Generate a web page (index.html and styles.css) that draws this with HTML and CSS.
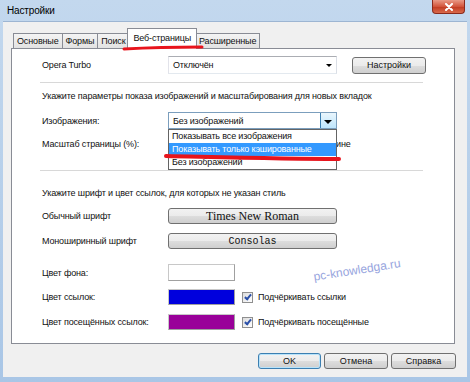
FILE: index.html
```html
<!DOCTYPE html>
<html lang="ru">
<head>
    <meta charset="UTF-8">
    <title>Настройки</title>
    <link rel="stylesheet" href="styles.css">
</head>
<body>
    <div class="window">
        <div class="titlebar">
            <span class="title">Настройки</span>
            <div class="close-btn">
                <svg width="10" height="8" viewBox="0 0 10 8">
                    <path d="M2 1 L8 7 M8 1 L2 7" stroke="#fff" stroke-width="2" stroke-linecap="round"/>
                </svg>
            </div>
        </div>
        <div class="client">
            <div class="tabs">
                <div class="tab">Основные</div>
                <div class="tab">Формы</div>
                <div class="tab">Поиск</div>
                <div class="tab active">Веб-страницы</div>
                <div class="tab">Расширенные</div>
                <svg class="mark mark-tab" width="82" height="8" viewBox="0 0 82 8">
                    <path d="M2 5 C20 4, 50 3, 80 3" stroke="#e8141c" stroke-width="3" fill="none" stroke-linecap="round"/>
                </svg>
            </div>
            <div class="panel">
                <div class="row row-turbo">
                    <span class="label">Opera Turbo</span>
                    <div class="combo">Отключён<span class="arrow"></span></div>
                    <button class="btn btn-setup">Настройки</button>
                </div>
                <div class="sep"></div>
                <div class="row heading">Укажите параметры показа изображений и масштабирования для новых вкладок</div>
                <div class="row row-images">
                    <span class="label">Изображения:</span>
                    <div class="combo open">Без изображений<span class="drop-btn"><span class="arrow"></span></span>
                        <ul class="droplist">
                            <li>Показывать все изображения</li>
                            <li class="selected">Показывать только кэшированные</li>
                            <li>Без изображений</li>
                            <svg class="mark mark-item" width="180" height="9" viewBox="0 0 180 9">
                                <path d="M3 3 C50 4, 120 6, 176 6" stroke="#e8141c" stroke-width="4" fill="none" stroke-linecap="round"/>
                            </svg>
                        </ul>
                    </div>
                </div>
                <div class="row row-zoom">
                    <span class="label">Масштаб страницы (%):</span>
                    <div class="field"></div>
                    <span class="check"><span class="box"></span>Подгонять по ширине</span>
                </div>
                <div class="sep sep-2"></div>
                <div class="row heading heading-2">Укажите шрифт и цвет ссылок, для которых не указан стиль</div>
                <div class="row row-font">
                    <span class="label">Обычный шрифт</span>
                    <button class="btn btn-font serif">Times New Roman</button>
                </div>
                <div class="row row-mono">
                    <span class="label">Моноширинный шрифт</span>
                    <button class="btn btn-font mono">Consolas</button>
                </div>
                <div class="row row-bg">
                    <span class="label">Цвет фона:</span>
                    <div class="swatch white"></div>
                </div>
                <div class="row row-link">
                    <span class="label">Цвет ссылок:</span>
                    <div class="swatch blue"></div>
                    <span class="check"><span class="box checked"></span>Подчёркивать ссылки</span>
                </div>
                <div class="row row-visited">
                    <span class="label">Цвет посещённых ссылок:</span>
                    <div class="swatch purple"></div>
                    <span class="check"><span class="box checked"></span>Подчёркивать посещённые</span>
                </div>
                <div class="watermark">pc-knowledga.ru</div>
            </div>
            <div class="footer">
                <button class="btn btn-ok">OK</button>
                <button class="btn btn-cancel">Отмена</button>
                <button class="btn btn-help">Справка</button>
            </div>
        </div>
    </div>
</body>
</html>
```

FILE: styles.css
```css
body {
    margin: 0;
    font-family: "Liberation Sans", Arial, sans-serif;
    font-size: 9px;
    letter-spacing: -0.15px;
    color: #111;
}
.window {
    width: 470px;
    height: 382px;
    box-sizing: border-box;
    padding: 0 3px 5px 3px;
    background: linear-gradient(#c3d8ee, #a9c6e6);
    display: flex;
    flex-direction: column;
}
.titlebar {
    height: 21px;
    display: flex;
    align-items: center;
    flex-shrink: 0;
}
.title {
    margin-left: 4px;
    font-size: 10px;
    color: #000;
}
.close-btn {
    margin-left: auto;
    margin-right: 2px;
    align-self: flex-start;
    width: 33px;
    height: 14px;
    box-sizing: border-box;
    border: 1px solid #8a2a1c;
    border-top: none;
    border-radius: 0 0 4px 4px;
    background: linear-gradient(#e99a86, #d2553c 50%, #c0391f 51%, #d96a4c);
    display: flex;
    align-items: center;
    justify-content: center;
}
.client {
    flex: 1;
    background: #f0f0f0;
    padding: 7px 12px 0 8px;
    border-top: 1px solid #9db5d2;
    display: flex;
    flex-direction: column;
}

/* tabs */
.tabs {
    display: flex;
    align-items: flex-end;
    height: 20px;
    padding-left: 2px;
    margin-bottom: -1px;
    position: relative;
    z-index: 1;
    white-space: nowrap;
}
.tab {
    height: 14px;
    line-height: 15px;
    padding: 0 3px;
    margin-bottom: 1px;
    margin-right: -1px;
    border: 1px solid #898c95;
    border-bottom: none;
    background: linear-gradient(#f4f4f4, #e2e2e2);
}
.tab.active {
    height: 20px;
    line-height: 19px;
    margin: 0 -2px 0 -1px;
    padding: 0 5px;
    background: #fff;
    position: relative;
    z-index: 1;
}
.mark {
    position: absolute;
    z-index: 3;
}
.mark-tab {
    left: 111px;
    top: 15px;
}

/* panel */
.panel {
    height: 296px;
    box-sizing: border-box;
    border: 1px solid #898c95;
    background: #fff;
    padding: 7px 0 0 30px;
    position: relative;
    white-space: nowrap;
}
.row {
    display: flex;
    align-items: center;
}
.label {
    width: 126px;
    flex-shrink: 0;
}
.row-turbo {
    height: 18px;
}
.combo {
    width: 169px;
    height: 100%;
    box-sizing: border-box;
    border: 1px solid #abadb3;
    border-color: #abadb3 #dbdfe6 #e3e9ef #e2e3ea;
    background: #fff;
    padding-left: 4px;
    display: flex;
    align-items: center;
    position: relative;
}
.arrow {
    position: absolute;
    right: 4px;
    top: 50%;
    margin-top: -1px;
    border-left: 3px solid transparent;
    border-right: 3px solid transparent;
    border-top: 3px solid #000;
}
.btn {
    font: inherit;
    color: #111;
    padding: 0;
    border: 1px solid #707070;
    border-radius: 3px;
    background: linear-gradient(#f2f2f2 0%, #ebebeb 50%, #dddddd 51%, #cfcfcf 100%);
    box-sizing: border-box;
}
.btn-setup {
    width: 74px;
    height: 17px;
    margin-left: 15px;
}
.sep {
    width: 383px;
    margin-left: -2px;
    margin-top: 8px;
    border-top: 1px solid #d8d8d8;
}
.sep-2 {
    margin-top: 19px;
}
.heading {
    height: 14px;
    margin-top: 6px;
}
.heading-2 {
    margin-top: 15px;
}
.row-images {
    height: 17px;
    margin-top: 9px;
    position: relative;
    z-index: 2;
}
.combo.open {
    border-color: #7b9ebd;
}
.drop-btn {
    position: absolute;
    right: 0;
    top: 0;
    bottom: 0;
    width: 15px;
    border-left: 1px solid #3c7fb1;
    background: linear-gradient(#eaf6fd, #bee6fd);
}
.drop-btn .arrow {
    right: 4px;
    border-left-width: 4px;
    border-right-width: 4px;
    border-top-width: 4px;
}
.droplist {
    list-style: none;
    margin: 0;
    padding: 0;
    position: absolute;
    left: -1px;
    top: 16px;
    width: 169px;
    box-sizing: border-box;
    border: 1px solid #646464;
    background: #fff;
}
.droplist li {
    height: 13px;
    line-height: 13px;
    padding-left: 3px;
}
.droplist li.selected {
    background: #3399ff;
    color: #fff;
}
.mark-item {
    left: -6px;
    top: 23px;
}
.row-zoom {
    height: 14px;
    margin-top: 8px;
}
.field {
    width: 60px;
    height: 16px;
    border: 1px solid #abadb3;
}
.check {
    display: flex;
    align-items: center;
    margin-left: 7px;
}
.box {
    width: 9px;
    height: 9px;
    border: 1px solid #8f8f8f;
    background: linear-gradient(135deg, #dcdcdc, #fff);
    margin-right: 5px;
    position: relative;
}
.box.checked::after {
    content: "";
    position: absolute;
    left: 3px;
    top: 0;
    width: 2px;
    height: 5px;
    border-right: 2px solid #2a4fa8;
    border-bottom: 2px solid #2a4fa8;
    transform: rotate(40deg);
}
.row-zoom .check {
    margin-left: 17px;
}
.row-font {
    height: 16px;
    margin-top: 8px;
}
.row-mono {
    height: 16px;
    margin-top: 9px;
}
.btn-font {
    width: 169px;
    height: 100%;
}
.serif {
    font-family: "Liberation Serif", serif;
    font-size: 12px;
    letter-spacing: 0;
}
.mono {
    font-family: "Liberation Mono", monospace;
    font-size: 10px;
    letter-spacing: 0;
}
.row-bg {
    height: 17px;
    margin-top: 15px;
}
.row-link {
    height: 16px;
    margin-top: 8px;
}
.row-visited {
    height: 16px;
    margin-top: 9px;
}
.swatch {
    width: 67px;
    height: 100%;
    box-sizing: border-box;
    border: 1px solid #c8c8c8;
    border-right-color: #a0a0a0;
    border-bottom-color: #a0a0a0;
}
.white {
    background: #fff;
}
.blue {
    background: #0000dd;
}
.purple {
    background: #990099;
}
.watermark {
    position: absolute;
    left: 301px;
    top: 214px;
    font-family: "Liberation Sans", sans-serif;
    font-size: 12px;
    letter-spacing: 0;
    color: #97a5de;
    transform: rotate(-9deg);
}

/* footer buttons */
.footer {
    display: flex;
    justify-content: flex-end;
    gap: 3px;
    padding-top: 9px;
    margin-right: -1px;
}
.footer .btn {
    height: 16px;
}
.btn-ok {
    width: 63px;
    border-color: #3c7fb1;
    box-shadow: inset 0 0 0 1px #b7e3fb;
}
.btn-cancel {
    width: 64px;
}
.btn-help {
    width: 65px;
}
```
